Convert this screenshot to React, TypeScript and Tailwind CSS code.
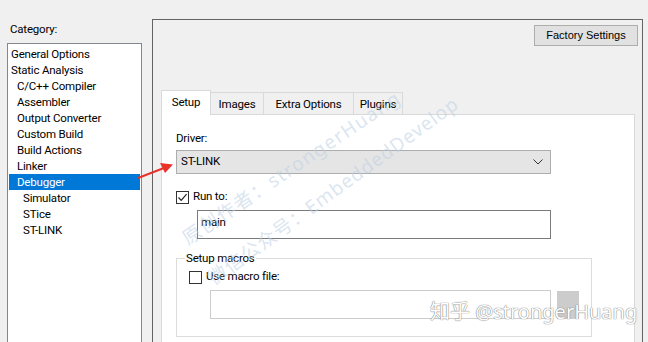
const categories: { label: string; indent: number; selected?: boolean }[] = [
  { label: "General Options", indent: 0 },
  { label: "Static Analysis", indent: 0 },
  { label: "C/C++ Compiler", indent: 1 },
  { label: "Assembler", indent: 1 },
  { label: "Output Converter", indent: 1 },
  { label: "Custom Build", indent: 1 },
  { label: "Build Actions", indent: 1 },
  { label: "Linker", indent: 1 },
  { label: "Debugger", indent: 1, selected: true },
  { label: "Simulator", indent: 2 },
  { label: "STice", indent: 2 },
  { label: "ST-LINK", indent: 2 },
]

const tabs = [
  { label: "Setup", w: "w-[50px]" },
  { label: "Images", w: "w-[53px]" },
  { label: "Extra Options", w: "w-[90px]" },
  { label: "Plugins", w: "w-[49px]" },
]

function CheckBox({ checked }: { checked?: boolean }) {
  return (
    <span className="w-[13px] h-[13px] border border-[#333] bg-white flex items-center justify-center shrink-0">
      {checked && (
        <svg width="11" height="11" viewBox="0 0 11 11">
          <path d="M1.5 5.5 L4.2 8.3 L9.6 2.2" fill="none" stroke="#222" strokeWidth="1.2" />
        </svg>
      )}
    </span>
  )
}

export default function App() {
  return (
    <div className="relative w-[648px] h-[342px] overflow-hidden bg-[#f0f0f0] font-['Roboto','Noto_Sans',sans-serif] text-[11.5px] tracking-[-0.2px] text-black flex">
      {/* Category list */}
      <div className="w-[142px] pl-[7px] pt-[20px] shrink-0">
        <div className="pl-[3px] h-[23px] leading-[18px]">Category:</div>
        <div className="w-[135px] h-[320px] border border-[#828790] bg-white pt-[2px] px-[1px]">
          {categories.map((c) => (
            <div
              key={c.label}
              className={
                "h-[16px] leading-[16px] whitespace-nowrap " +
                (c.selected ? "bg-[#0078d7] text-white " : "") +
                (c.indent === 0 ? "pl-[2px]" : c.indent === 1 ? "pl-[8px]" : "pl-[14px]")
              }
            >
              {c.label}
            </div>
          ))}
        </div>
      </div>

      {/* Options panel */}
      <div className="ml-[10px] mt-[19px] w-[491px] h-[330px] border border-[#646464] border-b-0 flex flex-col">
        <div className="flex justify-end pt-[5px] pr-[4px]">
          <button className="w-[104px] h-[21px] bg-[#e1e1e1] border border-[#adadad] font-['Liberation_Sans',sans-serif] text-[11px] tracking-normal leading-[19px] text-black">
            Factory Settings
          </button>
        </div>

        <div className="ml-[8px] mr-[7px] mt-[43px] flex flex-col flex-1">
          {/* Tabs */}
          <div className="flex items-end h-[25px]">
            {tabs.map((t, i) =>
              i === 0 ? (
                <div
                  key={t.label}
                  className={t.w + " h-[25px] bg-white border border-[#d9d9d9] border-b-0 text-center leading-[22px] relative z-10 -mb-px"}
                >
                  {t.label}
                </div>
              ) : (
                <div
                  key={t.label}
                  className={t.w + " h-[22px] bg-[#f0f0f0] border border-[#d9d9d9] border-l-0 border-b-0 text-center leading-[22px] whitespace-nowrap"}
                >
                  {t.label}
                </div>
              )
            )}
          </div>

          {/* Tab page */}
          <div className="flex-1 bg-white border border-[#d9d9d9] pl-[14px] pt-[14px]">
            <div className="leading-[18px] h-[21px]">Driver:</div>
            <div className="w-[375px] h-[24px] bg-[#e5e5e5] border border-[#adadad] flex items-center justify-between pl-[4px] pr-[7px]">
              <span>ST-LINK</span>
              <svg width="10" height="6" viewBox="0 0 10 6">
                <path d="M0.5 0.5 L5 5 L9.5 0.5" fill="none" stroke="#333" strokeWidth="1" />
              </svg>
            </div>

            <div className="flex items-center gap-[4px] mt-[15px] h-[16px]">
              <CheckBox checked />
              <span>Run to:</span>
            </div>
            <div className="ml-[21px] mt-[5px] w-[354px] h-[29px] border border-[#7a7a7a] pl-[3px] leading-[22px]">
              main
            </div>

            <fieldset className="mt-[12px] w-[416px] h-[86px] border border-[#dcdcdc] px-[12px] pb-0">
              <legend className="px-[1px] ml-[-4px] leading-[14px]">Setup macros</legend>
              <div className="flex items-center gap-[4px] mt-[4px] h-[16px]">
                <CheckBox />
                <span>Use macro file:</span>
              </div>
              <div className="flex items-center gap-[6px] ml-[21px] mt-[5px]">
                <div className="w-[341px] h-[29px] border border-[#cccccc] bg-white" />
                <div className="w-[22px] h-[28px] bg-[#cccccc]" />
              </div>
            </fieldset>
          </div>
        </div>
      </div>

      {/* Red arrow */}
      <svg className="absolute left-0 top-0 pointer-events-none" width="648" height="342">
        <line x1="138" y1="178" x2="164" y2="168" stroke="#e8322a" strokeWidth="2" />
        <path d="M173 164.5 L160 163 L165 173 Z" fill="#e8322a" />
      </svg>

      {/* Watermarks */}
      <div className="absolute left-[184px] top-[227px] h-[26px] leading-[26px] origin-left -rotate-[34deg] font-['Noto_Sans','Noto_Sans_CJK_SC',sans-serif] text-[19px] tracking-[1.5px] text-[#bcd0e4]/55 whitespace-nowrap pointer-events-none">
        原创作者：strongerHuang
      </div>
      <div className="absolute left-[210px] top-[267px] h-[26px] leading-[26px] origin-left -rotate-[36deg] font-['Noto_Sans','Noto_Sans_CJK_SC',sans-serif] text-[19px] tracking-[1px] text-[#bcd0e4]/55 whitespace-nowrap pointer-events-none">
        微信公众号：EmbeddedDevelop
      </div>
      <div className="absolute left-[430px] top-[297px] font-['Noto_Sans','Noto_Sans_CJK_SC',sans-serif] text-[20px] leading-[30px] tracking-normal text-white whitespace-nowrap pointer-events-none [text-shadow:0_0_1px_#777,0_0_1px_#777]">
        知乎 @strongerHuang
      </div>
    </div>
  )
}
